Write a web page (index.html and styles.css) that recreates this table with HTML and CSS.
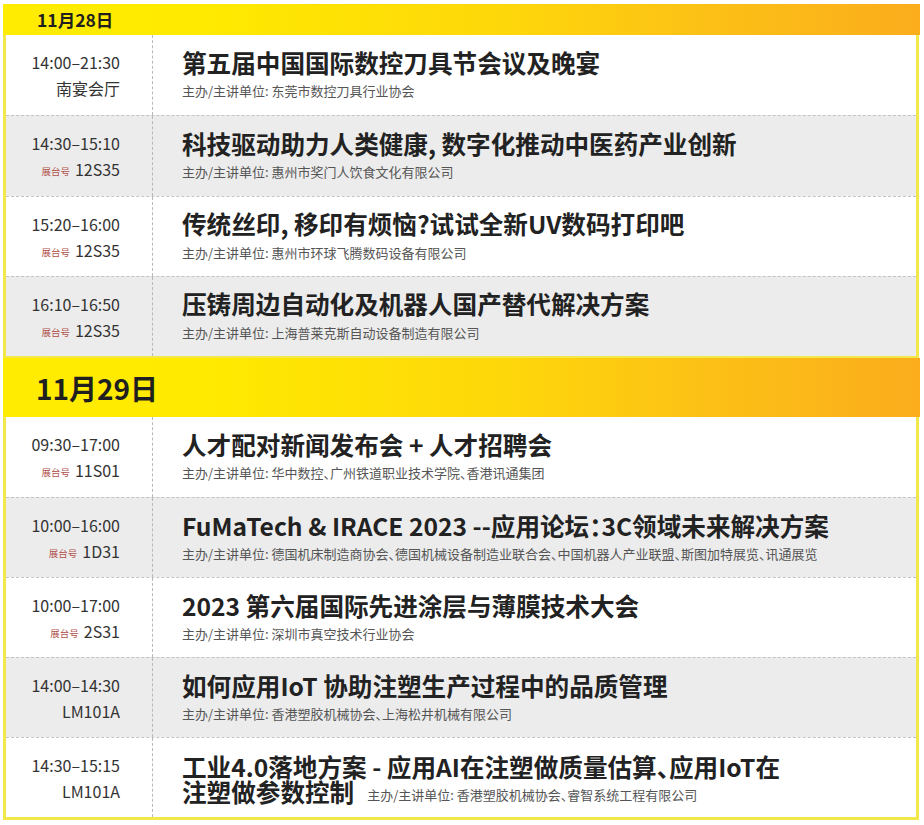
FILE: index.html
```html
<!DOCTYPE html>
<html lang="zh-CN">
<head>
<meta charset="utf-8">
<title>日程</title>
<link rel="stylesheet" href="styles.css">
</head>
<body>
<div class="schedule">
  <div class="day day-small">11月28日</div>
  <div class="rows rows-first">
    <div class="row">
      <div class="time"><div>14:00–21:30</div><div>南宴会厅</div></div>
      <div class="info"><div class="title">第五届中国国际数控刀具节会议及晚宴</div><div class="sub">主办/主讲单位: 东莞市数控刀具行业协会</div></div>
    </div>
    <div class="row alt">
      <div class="time"><div>14:30–15:10</div><div><span class="booth">展台号</span>12S35</div></div>
      <div class="info"><div class="title">科技驱动助力人类健康, 数字化推动中医药产业创新</div><div class="sub">主办/主讲单位: 惠州市奖门人饮食文化有限公司</div></div>
    </div>
    <div class="row">
      <div class="time"><div>15:20–16:00</div><div><span class="booth">展台号</span>12S35</div></div>
      <div class="info"><div class="title">传统丝印, 移印有烦恼?试试全新UV数码打印吧</div><div class="sub">主办/主讲单位: 惠州市环球飞腾数码设备有限公司</div></div>
    </div>
    <div class="row alt">
      <div class="time"><div>16:10–16:50</div><div><span class="booth">展台号</span>12S35</div></div>
      <div class="info"><div class="title">压铸周边自动化及机器人国产替代解决方案</div><div class="sub">主办/主讲单位: 上海普莱克斯自动设备制造有限公司</div></div>
    </div>
  </div>
  <div class="day day-big">11月29日</div>
  <div class="rows rows-second">
    <div class="row">
      <div class="time"><div>09:30–17:00</div><div><span class="booth">展台号</span>11S01</div></div>
      <div class="info"><div class="title">人才配对新闻发布会 + 人才招聘会</div><div class="sub">主办/主讲单位: 华中数控、广州铁道职业技术学院、香港讯通集团</div></div>
    </div>
    <div class="row alt">
      <div class="time"><div>10:00–16:00</div><div><span class="booth">展台号</span>1D31</div></div>
      <div class="info"><div class="title">FuMaTech &amp; IRACE 2023 --应用论坛：3C领域未来解决方案</div><div class="sub">主办/主讲单位: 德国机床制造商协会、德国机械设备制造业联合会、中国机器人产业联盟、斯图加特展览、讯通展览</div></div>
    </div>
    <div class="row">
      <div class="time"><div>10:00–17:00</div><div><span class="booth">展台号</span>2S31</div></div>
      <div class="info"><div class="title">2023 第六届国际先进涂层与薄膜技术大会</div><div class="sub">主办/主讲单位: 深圳市真空技术行业协会</div></div>
    </div>
    <div class="row alt">
      <div class="time"><div>14:00–14:30</div><div>LM101A</div></div>
      <div class="info"><div class="title">如何应用IoT 协助注塑生产过程中的品质管理</div><div class="sub">主办/主讲单位: 香港塑胶机械协会、上海松井机械有限公司</div></div>
    </div>
    <div class="row">
      <div class="time"><div>14:30–15:15</div><div>LM101A</div></div>
      <div class="info info-wrap"><div class="title title-wrap">工业4.0落地方案 - 应用AI在注塑做质量估算、应用IoT在<br>注塑做参数控制<span class="sub sub-inline">主办/主讲单位: 香港塑胶机械协会、睿智系统工程有限公司</span></div></div>
    </div>
  </div>
</div>
</body>
</html>
```

FILE: styles.css
```css
* { box-sizing: border-box; }

html, body {
  margin: 0;
  padding: 0;
  background: #ffffff;
}

body {
  font-family: "Noto Sans CJK SC", "Noto Sans", sans-serif;
  color: #222222;
}

.schedule {
  margin: 4px 0 0 3px;
  width: 917px;
}

.day {
  display: flex;
  align-items: center;
  font-weight: 700;
  color: #1f1f1f;
  background: linear-gradient(90deg, #ffec00 0%, #ffea00 22%, #fed70a 55%, #fcc215 75%, #fbad1c 100%);
}

.day-small {
  height: 31px;
  padding-left: 34px;
  font-size: 17.5px;
}

.day-big {
  height: 59px;
  padding-left: 33px;
  font-size: 28px;
}

.rows {
  width: 916px;
  border-left: 3px solid #f2e84a;
  border-right: 3px solid #f2e84a;
}

.rows-first { border-bottom: 2px solid #f2e84a; }
.rows-second { border-bottom: 3px solid #f2e84a; }

.row {
  display: grid;
  grid-template-columns: 147px 1fr;
  height: 80px;
  border-top: 1px dashed #c4c4c4;
  background: #ffffff;
}

.rows-first .row { height: 80.25px; }

.row:first-child { border-top: none; }

.row.alt { background: #ececec; }

.time {
  border-right: 1px dashed #b8b8b8;
  text-align: right;
  padding: 14px 32px 0 0;
  font-size: 16px;
  line-height: 26px;
  color: #333333;
}

.booth {
  font-size: 9.5px;
  color: #b0504a;
  margin-right: 5px;
  vertical-align: 1px;
}

.info {
  padding: 14.5px 0 0 29px;
}

.title {
  font-size: 24.6px;
  font-weight: 700;
  line-height: 25px;
  color: #222222;
  font-feature-settings: "halt";
}

.sub {
  margin-top: 7.5px;
  font-size: 13px;
  line-height: 18px;
  color: #555555;
  font-feature-settings: "halt";
}

.info-wrap { padding-top: 15.5px; }

.sub-inline {
  margin: 0 0 0 13px;
  font-weight: 400;
  vertical-align: 2px;
}
```
